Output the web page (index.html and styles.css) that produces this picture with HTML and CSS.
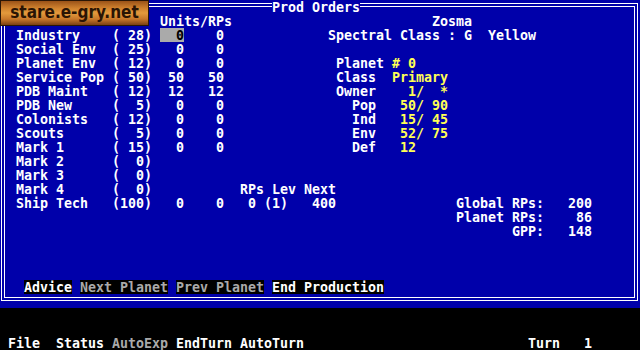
FILE: index.html
```html
<!DOCTYPE html>
<html>
<head>
<meta charset="utf-8">
<link rel="stylesheet" href="styles.css">
</head>
<body>
<div class="window">
  <div class="logo">stare.e-gry.net</div>
  <div class="title">Prod Orders</div>
  <div class="frame">
    <div class="screen">
<div class="ln">                   Units/RPs                         Zosma</div>
<div class="ln"> Industry    ( 28) <span class="hl">  0</span>    0             Spectral Class : G  Yellow</div>
<div class="ln"> Social Env  ( 25)   0    0</div>
<div class="ln"> Planet Env  ( 12)   0    0              Planet <span class="y"># 0</span></div>
<div class="ln"> Service Pop ( 50)  50   50              Class  <span class="y">Primary</span></div>
<div class="ln"> PDB Maint   ( 12)  12   12              Owner  <span class="y">  1/  *</span></div>
<div class="ln"> PDB New     (  5)   0    0                Pop  <span class="y"> 50/ 90</span></div>
<div class="ln"> Colonists   ( 12)   0    0                Ind  <span class="y"> 15/ 45</span></div>
<div class="ln"> Scouts      (  5)   0    0                Env  <span class="y"> 52/ 75</span></div>
<div class="ln"> Mark 1      ( 15)   0    0                Def  <span class="y"> 12</span></div>
<div class="ln"> Mark 2      (  0)</div>
<div class="ln"> Mark 3      (  0)</div>
<div class="ln"> Mark 4      (  0)           RPs Lev Next</div>
<div class="ln"> Ship Tech   (100)   0    0   0 (1)   400               Global RPs:   200</div>
<div class="ln">                                                        Planet RPs:    86</div>
<div class="ln">                                                               GPP:   148</div>
<div class="ln"></div>
<div class="ln"></div>
<div class="ln"></div>
<div class="ln">  <span class="btn">Advice</span> <span class="btn dim">Next Planet</span> <span class="btn dim">Prev Planet</span> <span class="btn">End Production</span></div>
    </div>
  </div>
</div>
<div class="ln menubar"> File  Status <span class="dim">AutoExp</span> EndTurn AutoTurn                            Turn   1</div>
</body>
</html>
```
FILE: styles.css
```css
html, body {
  margin: 0;
  padding: 0;
  background: #000;
}
body {
  width: 640px;
  height: 350px;
  overflow: hidden;
  font-family: "DejaVu Sans Mono", "Liberation Mono", monospace;
  font-weight: bold;
  font-size: 13.3px;
  letter-spacing: -0.007px;
  color: #fff;
}
.window {
  position: relative;
  height: 308px;
  box-sizing: border-box;
  padding: 3px 2px 7px 1px;
  background: #0000aa;
}
.frame {
  height: 100%;
  box-sizing: border-box;
  border: 4px double #fff;
  padding: 7px 2px 3px 3px;
}
.screen {
  display: grid;
  grid-auto-rows: 14px;
}
.ln {
  white-space: pre;
  line-height: 16px;
  height: 14px;
}
.title {
  position: absolute;
  left: 272px;
  top: 0;
  height: 14px;
  line-height: 16px;
  background: #0000aa;
  white-space: pre;
}
.y {
  color: #ffff55;
}
.hl {
  display: inline-block;
  vertical-align: top;
  height: 14px;
  background: #aaaaaa;
  color: #000;
}
.btn {
  display: inline-block;
  vertical-align: top;
  height: 14px;
  background: #000;
  color: #fff;
}
.dim {
  color: #aaaaaa;
}
.menubar {
  margin-top: 28px;
  line-height: 15px;
}
.logo {
  position: absolute;
  left: 0;
  top: 0;
  z-index: 2;
  width: 149px;
  height: 26px;
  box-sizing: border-box;
  border: 1px solid #2a1606;
  background: linear-gradient(to bottom, #9a5218 0%, #d0822e 30%, #e49a3c 50%, #c8782a 75%, #7a4014 100%);
  font-family: "DejaVu Sans Condensed", "DejaVu Sans", sans-serif;
  font-stretch: condensed;
  font-weight: bold;
  font-size: 17px;
  letter-spacing: 0;
  line-height: 23px;
  color: #2a1404;
  text-align: center;
  white-space: nowrap;
  overflow: hidden;
}
```
